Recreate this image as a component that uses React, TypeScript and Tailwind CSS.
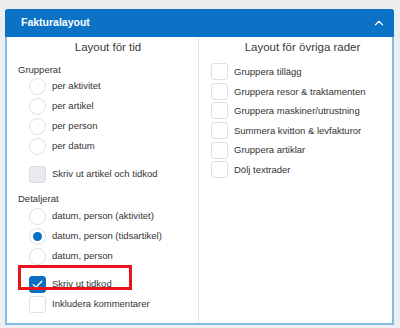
import { ChevronUp } from "lucide-react";

const font = { fontFamily: '"Liberation Sans", Arial, sans-serif' };

function Radio({ label, checked = false }: { label: string; checked?: boolean }) {
    return (
        <div className="h-[20px] flex items-center pl-[11px] gap-[6px]">
            <span className="w-[17px] h-[17px] rounded-full border border-[#dcdfe3] bg-white flex items-center justify-center shrink-0">
                {checked && <span className="w-[9px] h-[9px] rounded-full bg-[#0b6fc2]" />}
            </span>
            <span className="text-[9.5px] text-[#333] leading-none">{label}</span>
        </div>
    );
}

function Check({ label, state = "off", indent = true, h = "h-[20px]" }: { label: string; state?: "off" | "on" | "disabled"; indent?: boolean; h?: string }) {
    const box =
        state === "on"
            ? "bg-[#0b6fc2] border-[#0b6fc2]"
            : state === "disabled"
            ? "bg-[#e9ebee] border-[#d9dce0]"
            : "bg-white border-[#dcdfe3]";
    return (
        <div className={`${h} flex items-center gap-[6px] ${indent ? "pl-[11px]" : "pl-[6px]"}`}>
            <span className={`w-[17px] h-[17px] rounded-[3px] border flex items-center justify-center shrink-0 ${box}`}>
                {state === "on" && (
                    <svg width="11" height="9" viewBox="0 0 11 9" fill="none">
                        <path d="M1.2 4.6 L4 7.3 L9.8 1.3" stroke="white" strokeWidth="1.3" strokeLinecap="round" strokeLinejoin="round" />
                    </svg>
                )}
            </span>
            <span className="text-[9.5px] text-[#333] leading-none">{label}</span>
        </div>
    );
}

export default function App() {
    return (
        <div className="w-[400px] h-[328px] bg-[#eceef0] pt-[9px] pl-[5px] overflow-hidden" style={font}>
            <div className="w-[389px] h-[316px] bg-white border-x-2 border-b-2 border-[#86bce4] rounded-t-[3px] flex flex-col">
                {/* Header */}
                <div className="h-[28px] -mx-[2px] bg-[#0b72c6] rounded-t-[3px] flex items-center justify-between pl-[16px] pr-[8px] shrink-0">
                    <span className="text-white font-bold text-[10.5px]">Fakturalayout</span>
                    <ChevronUp className="w-[14px] h-[14px] text-white" strokeWidth={2} />
                </div>

                <div className="flex flex-1 min-h-0">
                    {/* Left column */}
                    <div className="w-[192px] border-r border-[#e3e6ea] pl-[11px] flex flex-col">
                        <div className="h-[22px] flex items-center justify-center text-[11.5px] text-[#3a3a3a]">Layout för tid</div>
                        <div className="h-[12px] mt-[5px] flex items-center text-[9.5px] text-[#333]">Grupperat</div>
                        <Radio label="per aktivitet" />
                        <Radio label="per artikel" />
                        <Radio label="per person" />
                        <Radio label="per datum" />
                        <div className="h-[8px]" />
                        <Check label="Skriv ut artikel och tidkod" state="disabled" />
                        <div className="h-[14px] mt-[8px] flex items-center text-[9.5px] text-[#333]">Detaljerat</div>
                        <Radio label="datum, person (aktivitet)" />
                        <Radio label="datum, person (tidsartikel)" checked />
                        <Radio label="datum, person" />
                        <div className="h-[8px]" />
                        <div className="relative">
                            <Check label="Skriv ut tidkod" state="on" />
                            <div className="absolute left-0 top-[-9px] w-[114px] h-[25px] border-[3px] border-[#e8141b] pointer-events-none" />
                        </div>
                        <Check label="Inkludera kommentarer" />
                    </div>

                    {/* Right column */}
                    <div className="flex-1 pl-[6px] flex flex-col">
                        <div className="h-[22px] flex items-center justify-center pl-[8px] text-[11.5px] text-[#3a3a3a]">Layout för övriga rader</div>
                        <div className="h-[3px]" />
                        <Check label="Gruppera tillägg" indent={false} h="h-[19.6px]" />
                        <Check label="Gruppera resor & traktamenten" indent={false} h="h-[19.6px]" />
                        <Check label="Gruppera maskiner/utrustning" indent={false} h="h-[19.6px]" />
                        <Check label="Summera kvitton & levfakturor" indent={false} h="h-[19.6px]" />
                        <Check label="Gruppera artiklar" indent={false} h="h-[19.6px]" />
                        <Check label="Dölj textrader" indent={false} h="h-[19.6px]" />
                    </div>
                </div>
            </div>
        </div>
    );
}
